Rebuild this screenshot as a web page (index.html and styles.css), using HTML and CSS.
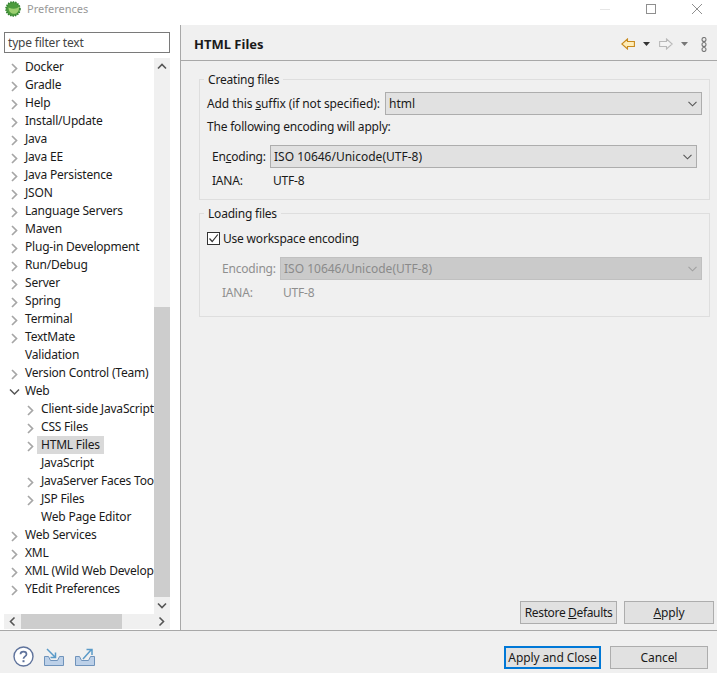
FILE: index.html
```html
<!DOCTYPE html>
<html lang="en">
<head>
<meta charset="utf-8">
<title>Preferences</title>
<link rel="stylesheet" href="styles.css">
</head>
<body>
<div class="window">
  <header class="titlebar">
    <svg class="app-icon" width="16" height="16" viewBox="0 0 16 16"><circle cx="8" cy="8" r="7" fill="#4b9a3c" stroke="#2f7f2c" stroke-width="1.6" stroke-dasharray="1.4 1.1"/><path d="M3.5 6.5C3.5 12 8 13.5 11 12.5C14 11 14 7.5 14 5.5C12 8 8 8.5 3.5 6.5Z" fill="#9ccf70"/></svg>
    <span class="title-text">Preferences</span>
    <div class="win-controls">
      <svg width="12" height="12" viewBox="0 0 12 12"><path d="M1 6.5H11" stroke="#e6e6e6"/></svg>
      <svg width="12" height="12" viewBox="0 0 12 12"><rect x="1.5" y="1.5" width="9" height="9" fill="none" stroke="#8f8f8f"/></svg>
      <svg width="12" height="12" viewBox="0 0 12 12"><path d="M1 1L11 11M11 1L1 11" stroke="#8f8f8f"/></svg>
    </div>
  </header>
  <div class="main">
    <aside class="sidebar">
      <div class="filter"><span>type filter text</span></div>
      <div class="tree-box">
        <div class="tree-row-area">
          <ul class="tree">
            <li class="row"><svg class="tw"><use href="#chev-r"/></svg>Docker</li>
            <li class="row"><svg class="tw"><use href="#chev-r"/></svg>Gradle</li>
            <li class="row"><svg class="tw"><use href="#chev-r"/></svg>Help</li>
            <li class="row"><svg class="tw"><use href="#chev-r"/></svg>Install/Update</li>
            <li class="row"><svg class="tw"><use href="#chev-r"/></svg>Java</li>
            <li class="row"><svg class="tw"><use href="#chev-r"/></svg>Java EE</li>
            <li class="row"><svg class="tw"><use href="#chev-r"/></svg>Java Persistence</li>
            <li class="row"><svg class="tw"><use href="#chev-r"/></svg>JSON</li>
            <li class="row"><svg class="tw"><use href="#chev-r"/></svg>Language Servers</li>
            <li class="row"><svg class="tw"><use href="#chev-r"/></svg>Maven</li>
            <li class="row"><svg class="tw"><use href="#chev-r"/></svg>Plug-in Development</li>
            <li class="row"><svg class="tw"><use href="#chev-r"/></svg>Run/Debug</li>
            <li class="row"><svg class="tw"><use href="#chev-r"/></svg>Server</li>
            <li class="row"><svg class="tw"><use href="#chev-r"/></svg>Spring</li>
            <li class="row"><svg class="tw"><use href="#chev-r"/></svg>Terminal</li>
            <li class="row"><svg class="tw"><use href="#chev-r"/></svg>TextMate</li>
            <li class="row"><span class="tw"></span>Validation</li>
            <li class="row"><svg class="tw"><use href="#chev-r"/></svg>Version Control (Team)</li>
            <li class="row"><svg class="tw"><use href="#chev-d"/></svg>Web</li>
            <li class="row sub"><svg class="tw"><use href="#chev-r"/></svg>Client-side JavaScript</li>
            <li class="row sub"><svg class="tw"><use href="#chev-r"/></svg>CSS Files</li>
            <li class="row sub"><svg class="tw"><use href="#chev-r"/></svg><span class="selected">HTML Files</span></li>
            <li class="row sub"><span class="tw"></span>JavaScript</li>
            <li class="row sub"><svg class="tw"><use href="#chev-r"/></svg>JavaServer Faces Tools</li>
            <li class="row sub"><svg class="tw"><use href="#chev-r"/></svg>JSP Files</li>
            <li class="row sub"><span class="tw"></span>Web Page Editor</li>
            <li class="row"><svg class="tw"><use href="#chev-r"/></svg>Web Services</li>
            <li class="row"><svg class="tw"><use href="#chev-r"/></svg>XML</li>
            <li class="row"><svg class="tw"><use href="#chev-r"/></svg>XML (Wild Web Developer)</li>
            <li class="row"><svg class="tw"><use href="#chev-r"/></svg>YEdit Preferences</li>
          </ul>
          <div class="vscroll">
            <svg class="sb-arrow" width="16" height="17" viewBox="0 0 16 17"><path d="M4 10.5L8 6.5L12 10.5" fill="none" stroke="#555" stroke-width="1.6"/></svg>
            <div class="vtrack"><div class="vthumb"></div></div>
            <svg class="sb-arrow" width="16" height="17" viewBox="0 0 16 17"><path d="M4 6.5L8 10.5L12 6.5" fill="none" stroke="#555" stroke-width="1.6"/></svg>
          </div>
        </div>
        <div class="hscroll">
          <svg width="17" height="15" viewBox="0 0 17 15"><path d="M10.5 3.5L6.5 7.5L10.5 11.5" fill="none" stroke="#555" stroke-width="1.6"/></svg>
          <div class="htrack"><div class="hthumb"></div></div>
          <svg width="17" height="15" viewBox="0 0 17 15"><path d="M6.5 3.5L10.5 7.5L6.5 11.5" fill="none" stroke="#555" stroke-width="1.6"/></svg>
        </div>
      </div>
    </aside>
    <section class="content">
      <div class="content-head">
        <h1>HTML Files</h1>
        <div class="nav-icons">
          <svg width="14" height="12" viewBox="0 0 14 12"><path d="M6.5 1L0.8 6L6.5 11V8.5H13.4V3.5H6.5Z" fill="#ffedb8" stroke="#c88a1e" stroke-width="1.1"/></svg>
          <svg class="drop" width="7" height="4" viewBox="0 0 7 4"><path d="M0 0H7L3.5 4Z" fill="#333"/></svg>
          <svg width="14" height="12" viewBox="0 0 14 12"><path d="M7.5 1L13.2 6L7.5 11V8.5H0.6V3.5H7.5Z" fill="#f4f4f4" stroke="#b9b9b9" stroke-width="1.1"/></svg>
          <svg class="drop" width="7" height="4" viewBox="0 0 7 4"><path d="M0 0H7L3.5 4Z" fill="#777"/></svg>
          <svg class="more" width="6" height="15" viewBox="0 0 6 15"><g fill="none" stroke="#777" stroke-width="1.1"><circle cx="3" cy="2.5" r="2"/><circle cx="3" cy="7.5" r="2"/><circle cx="3" cy="12.5" r="2"/></g></svg>
        </div>
      </div>
      <div class="page">
        <fieldset class="group creating">
          <legend>Creating files</legend>
          <div class="form-row suffix-row">
            <label class="suffix-label">Add this <u>s</u>uffix (if not specified):</label>
            <div class="combo grow"><span>html</span><svg class="combo-arrow"><use href="#combo-chev"/></svg></div>
          </div>
          <p class="note">The following encoding will apply:</p>
          <div class="form-row enc-row">
            <label class="enc-label">En<u>c</u>oding:</label>
            <div class="combo grow"><span>ISO 10646/Unicode(UTF-8)</span><svg class="combo-arrow"><use href="#combo-chev"/></svg></div>
          </div>
          <div class="form-row iana-row">
            <span class="iana-label">IANA:</span><span>UTF-8</span>
          </div>
        </fieldset>
        <fieldset class="group loading">
          <legend>Loading files</legend>
          <div class="check-row">
            <span class="checkbox"><svg width="11" height="11" viewBox="0 0 11 11"><path d="M1.5 5.5L4.2 8.5L9.8 1.5" fill="none" stroke="#333" stroke-width="1.2"/></svg></span>
            <span class="check-label">Use workspace encoding</span>
          </div>
          <div class="form-row enc-row disabled">
            <label class="enc-label">Encoding:</label>
            <div class="combo grow off"><span>ISO 10646/Unicode(UTF-8)</span><svg class="combo-arrow"><use href="#combo-chev"/></svg></div>
          </div>
          <div class="form-row iana-row disabled">
            <span class="iana-label">IANA:</span><span>UTF-8</span>
          </div>
        </fieldset>
        <div class="page-buttons">
          <button class="btn restore">Restore <u>D</u>efaults</button>
          <button class="btn apply"><u>A</u>pply</button>
        </div>
      </div>
    </section>
  </div>
  <footer class="footer">
    <div class="foot-icons">
      <svg width="21" height="21" viewBox="0 0 21 21"><circle cx="10.5" cy="10.5" r="9.5" fill="#fff" stroke="#5f739c" stroke-width="1.4"/><path d="M7.5 8.2C7.5 4.8 13.5 4.8 13.5 8.2C13.5 10.5 10.5 10.2 10.5 12.8" fill="none" stroke="#5f739c" stroke-width="1.7"/><rect x="9.5" y="14.2" width="2" height="2" fill="#5f739c"/></svg>
      <svg class="imp" width="22" height="20" viewBox="0 0 22 20"><path d="M1.5 9.5H5.5L7.5 13.5H14.5L16.5 9.5H20.5V18.5H1.5Z" fill="#bcd0e8" stroke="#6f93bb"/><path d="M4 2L12 10M12.5 5.5V10.5H7.5" fill="none" stroke="#5a9ac8" stroke-width="1.5"/></svg>
      <svg class="exp" width="22" height="20" viewBox="0 0 22 20"><path d="M1.5 9.5H5.5L7.5 13.5H14.5L16.5 9.5H20.5V18.5H1.5Z" fill="#bcd0e8" stroke="#6f93bb"/><path d="M9 12L17 3M12.5 2.5H18V8" fill="none" stroke="#5a9ac8" stroke-width="1.5"/></svg>
    </div>
    <div class="foot-buttons">
      <button class="btn primary">Apply and Close</button>
      <button class="btn cancel">Cancel</button>
    </div>
  </footer>
</div>
<svg class="defs" width="0" height="0">
  <defs>
    <symbol id="chev-r" viewBox="0 0 14 18"><path d="M4.5 6L9 10.5L4.5 15" fill="none" stroke="#a6a6a6" stroke-width="1.7"/></symbol>
    <symbol id="chev-d" viewBox="0 0 14 18"><path d="M2.5 7.5L7 12L11.5 7.5" fill="none" stroke="#555" stroke-width="1.5"/></symbol>
    <symbol id="combo-chev" viewBox="0 0 9 6"><path d="M0.5 0.8L4.5 4.8L8.5 0.8" fill="none" stroke="currentColor" stroke-width="1.1"/></symbol>
  </defs>
</svg>
</body>
</html>
```
FILE: styles.css
```css
* { box-sizing: border-box; }
html, body { margin: 0; padding: 0; }
body { width: 717px; height: 673px; overflow: hidden; font: 12px/18px "Noto Sans", "Open Sans", sans-serif; letter-spacing: -0.2px; color: #1a1a1a; background: #f0f0f0; }
.window { display: flex; flex-direction: column; height: 673px; }
.titlebar { height: 25px; flex: none; background: #fff; display: flex; align-items: flex-start; padding-left: 5px; }
.app-icon { margin-top: 1px; flex: none; }
.title-text { margin-left: 6px; color: #999; font-size: 11px; letter-spacing: 0; }
.win-controls { margin-left: auto; display: flex; gap: 34px; padding: 3px 14px 0 0; }
.main { flex: 1; display: flex; min-height: 0; }
.sidebar { width: 181px; flex: none; background: #fff; border-right: 1px solid #a8a8a8; padding: 7px 10px 0 4px; display: flex; flex-direction: column; }
.filter { height: 21px; flex: none; border: 1px solid #7a7a7a; padding: 0 3px; line-height: 19px; color: #444; }
.tree-box { flex: 1; display: flex; flex-direction: column; margin-top: 5px; min-height: 0; }
.tree-row-area { flex: 1; display: flex; min-height: 0; }
.tree { list-style: none; margin: 0; padding: 0; flex: 1; min-width: 0; overflow: hidden; }
.row { height: 18px; line-height: 18px; white-space: nowrap; display: flex; }
.row.sub { padding-left: 16px; }
.tw { width: 21px; height: 18px; flex: none; }
.selected { background: #d9d9d9; margin-left: -4px; padding: 0 4px; }
.vscroll { width: 16px; flex: none; background: #f0f0f0; display: flex; flex-direction: column; }
.sb-arrow { flex: none; }
.vtrack { flex: 1; display: flex; flex-direction: column; justify-content: flex-end; }
.vthumb { height: 290px; background: #cdcdcd; }
.hscroll { height: 15px; flex: none; background: #f0f0f0; display: flex; margin-bottom: 1px; }
.htrack { flex: 1; }
.hthumb { width: 101px; height: 15px; background: #cdcdcd; }
.content { flex: 1; min-width: 0; display: flex; flex-direction: column; background: #f0f0f0; }
.content-head { height: 36px; flex: none; display: flex; align-items: center; padding: 3px 10px 0 13px; border-bottom: 1px solid #a8a8a8; }
h1 { margin: 0; font-size: 13px; font-weight: 700; letter-spacing: 0; }
.nav-icons { margin-left: auto; display: flex; align-items: center; }
.nav-icons .drop { margin: 0 9px 0 8px; }
.nav-icons .drop + svg + .drop { margin-right: 13px; }
.page { flex: 1; display: flex; flex-direction: column; padding: 10px 3px 6px 18px; min-height: 0; }
.group { margin: 0 4px 0 0; padding: 0; border: 1px solid #dedede; min-width: 0; }
.group legend { padding: 1px 4px 0; margin-left: -3px; line-height: 16px; }
.form-row { display: flex; align-items: center; }
.creating { height: 129px; padding: 4px 7px 0 7px; }
.suffix-row { height: 23px; }
.suffix-label { width: 178px; flex: none; letter-spacing: -0.1px; }
.note { margin: 3px 0 0; line-height: 18px; }
.enc-row { margin-top: 9px; height: 23px; padding: 0 5px; }
.enc-label { width: 58px; flex: none; }
.combo { height: 23px; background: #e1e1e1; border: 1px solid #adadad; display: flex; align-items: center; padding: 0 4px 0 3px; letter-spacing: 0; color: #1a1a1a; }
.grow { flex: 1; min-width: 0; }
.combo-arrow { width: 9px; height: 6px; margin-left: auto; color: #555; }
.iana-row { margin-top: 4px; padding-left: 5px; height: 18px; }
.iana-label { width: 61px; }
.loading { height: 112px; margin-top: 5px; padding: 7px 7px 0 7px; }
.check-row { display: flex; align-items: center; height: 18px; gap: 3px; }
.check-label { margin-top: 2px; }
.checkbox { width: 13px; height: 13px; background: #fff; border: 1px solid #333; display: flex; align-items: center; justify-content: center; }
.loading .enc-row { margin-top: 10px; padding: 0 0 0 15px; }
.loading .iana-row { padding-left: 15px; }
.disabled { color: #8f8f8f; }
.combo.off { background: #cacaca; border-color: #c0c0c0; color: #8a8a8a; }
.combo.off .combo-arrow { color: #a0a0a0; }
.page-buttons { margin-top: auto; display: flex; justify-content: flex-end; gap: 7px; }
.btn { font: inherit; letter-spacing: -0.1px; color: #1a1a1a; height: 23px; background: #e1e1e1; border: 1px solid #adadad; padding: 0; }
.restore { width: 97px; letter-spacing: -0.35px; }
.apply { width: 90px; }
.footer { height: 43px; flex: none; border-top: 1px solid #a8a8a8; display: flex; align-items: flex-start; padding: 15px 9px 0 13px; }
.foot-icons { display: flex; align-items: center; }
.imp, .exp { margin-left: 9px; }
.foot-buttons { margin-left: auto; display: flex; gap: 9px; }
.primary { width: 97px; border: 2px solid #0078d7; }
.cancel { width: 98px; }
.defs { position: absolute; }
```
